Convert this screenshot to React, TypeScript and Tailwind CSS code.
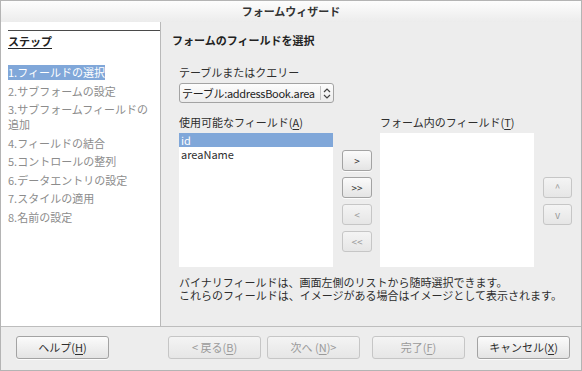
const steps = [
  "1.フィールドの選択",
  "2.サブフォームの設定",
  "3.サブフォームフィールドの\n追加",
  "4.フィールドの結合",
  "5.コントロールの整列",
  "6.データエントリの設定",
  "7.スタイルの適用",
  "8.名前の設定",
];

const Btn = ({
  label,
  disabled,
  className = "",
}: {
  label: React.ReactNode;
  disabled?: boolean;
  className?: string;
}) => (
  <div
    className={`flex items-center justify-center rounded-[3px] border bg-gradient-to-b ${
      disabled
        ? "border-[#c6c6c6] from-[#f4f4f4] to-[#e6e6e6] text-[#9a9a9a]"
        : "border-[#a3a3a3] from-[#fbfbfb] to-[#e4e4e4] text-[#2e2e2e] shadow-[0_1px_0_rgba(255,255,255,0.8)]"
    } ${className}`}
  >
    {label}
  </div>
);

const U = ({ c }: { c: string }) => <span className="underline underline-offset-2">{c}</span>;

const App = () => {
  return (
    <div
      className="w-[582px] h-[371px] border border-[#b4b4b4] bg-[#ededed] flex flex-col text-[11px] leading-[15px] text-[#2e2e2e] overflow-hidden"
      style={{ fontFamily: '"Noto Sans CJK JP", "Noto Sans", sans-serif' }}
    >
      {/* title bar */}
      <div className="h-[21px] shrink-0 bg-gradient-to-b from-[#fdfdfd] to-[#ececec] flex items-center justify-center font-bold text-[#333]">
        フォームウィザード
      </div>

      <div className="flex h-[305px] shrink-0 border-b border-[#bdbdbd]">
        {/* steps */}
        <div className="w-[160px] shrink-0 bg-white border-r border-[#b9b9b9] pl-[7px] pt-[8px]">
          <div className="border-t border-[#4a4a4a]" />
          <div className="mt-[3px] font-bold underline underline-offset-2 text-[#222]">ステップ</div>
          <div className="mt-[16px] flex flex-col gap-[3.5px]">
            {steps.map((s, i) => (
              <div key={i} className={i === 0 ? "self-start bg-[#80a7d9] text-white" : "text-[#8c8c8c] whitespace-pre-line"}>
                {s}
              </div>
            ))}
          </div>
        </div>

        {/* main */}
        <div className="flex-1 pl-[11px] pt-[11px]">
          <div className="font-bold text-[#222]">フォームのフィールドを選択</div>
          <div className="pl-[7px]">
            <div className="mt-[17px]">テーブルまたはクエリー</div>
            <div className="mt-[3px] w-[155px] h-[20px] rounded-[3px] border border-[#a3a3a3] bg-gradient-to-b from-[#fdfdfd] to-[#ececec] flex items-center">
              <span className="flex-1 pl-[2px] whitespace-nowrap overflow-hidden tracking-[-0.3px] text-[#222]">テーブル:addressBook.area</span>
              <span className="h-[14px] border-l border-[#c4c4c4] w-[13px] flex items-center justify-center">
                <svg width="8" height="11" viewBox="0 0 8 11" fill="none" stroke="#444" strokeWidth="1.2">
                  <path d="M1 4 L4 1 L7 4" />
                  <path d="M1 7 L4 10 L7 7" />
                </svg>
              </span>
            </div>

            <div className="mt-[12px] flex">
              <div className="w-[154px]">
                <div>
                  使用可能なフィールド(<U c="A" />)
                </div>
                <div className="mt-[3px] h-[134px] bg-white flex flex-col">
                  <div className="h-[14px] bg-[#80a7d9] text-white pl-[2px] leading-[14px]">id</div>
                  <div className="h-[14px] pl-[2px] leading-[14px]">areaName</div>
                </div>
              </div>

              <div className="ml-[9px] w-[30px] pt-[35px] flex flex-col gap-[6px] text-[10px]">
                <Btn label=">" className="h-[21px]" />
                <Btn label=">>" className="h-[21px]" />
                <Btn label="<" disabled className="h-[21px]" />
                <Btn label="<<" disabled className="h-[21px]" />
              </div>

              <div className="ml-[8px] w-[154px]">
                <div>
                  フォーム内のフィールド(<U c="T" />)
                </div>
                <div className="mt-[3px] h-[134px] bg-white" />
              </div>

              <div className="ml-[9px] w-[29px] pt-[62px] flex flex-col gap-[6px] text-[10px]">
                <Btn label="^" disabled className="h-[21px]" />
                <Btn label="v" disabled className="h-[21px]" />
              </div>
            </div>

            <div className="mt-[9px] leading-[13px] flex flex-col">
              <div className="h-[13px]">バイナリフィールドは、画面左側のリストから随時選択できます。</div>
              <div className="h-[13px]">これらのフィールドは、イメージがある場合はイメージとして表示されます。</div>
            </div>
          </div>
        </div>
      </div>

      {/* bottom bar */}
      <div className="flex items-start pl-[15px] pt-[9px]">
        <Btn label={<>ヘルプ(<U c="H" />)</>} className="w-[93px] h-[23px]" />
        <Btn label={<>&lt; 戻る(<U c="B" />)</>} disabled className="ml-[59px] w-[93px] h-[23px]" />
        <Btn label={<>次へ (<U c="N" />)&gt;</>} disabled className="ml-[6px] w-[93px] h-[23px]" />
        <Btn label={<>完了(<U c="F" />)</>} disabled className="ml-[12px] w-[93px] h-[23px]" />
        <Btn label={<>キャンセル(<U c="X" />)</>} className="ml-[12px] w-[93px] h-[23px]" />
      </div>
    </div>
  );
};

export default App;
